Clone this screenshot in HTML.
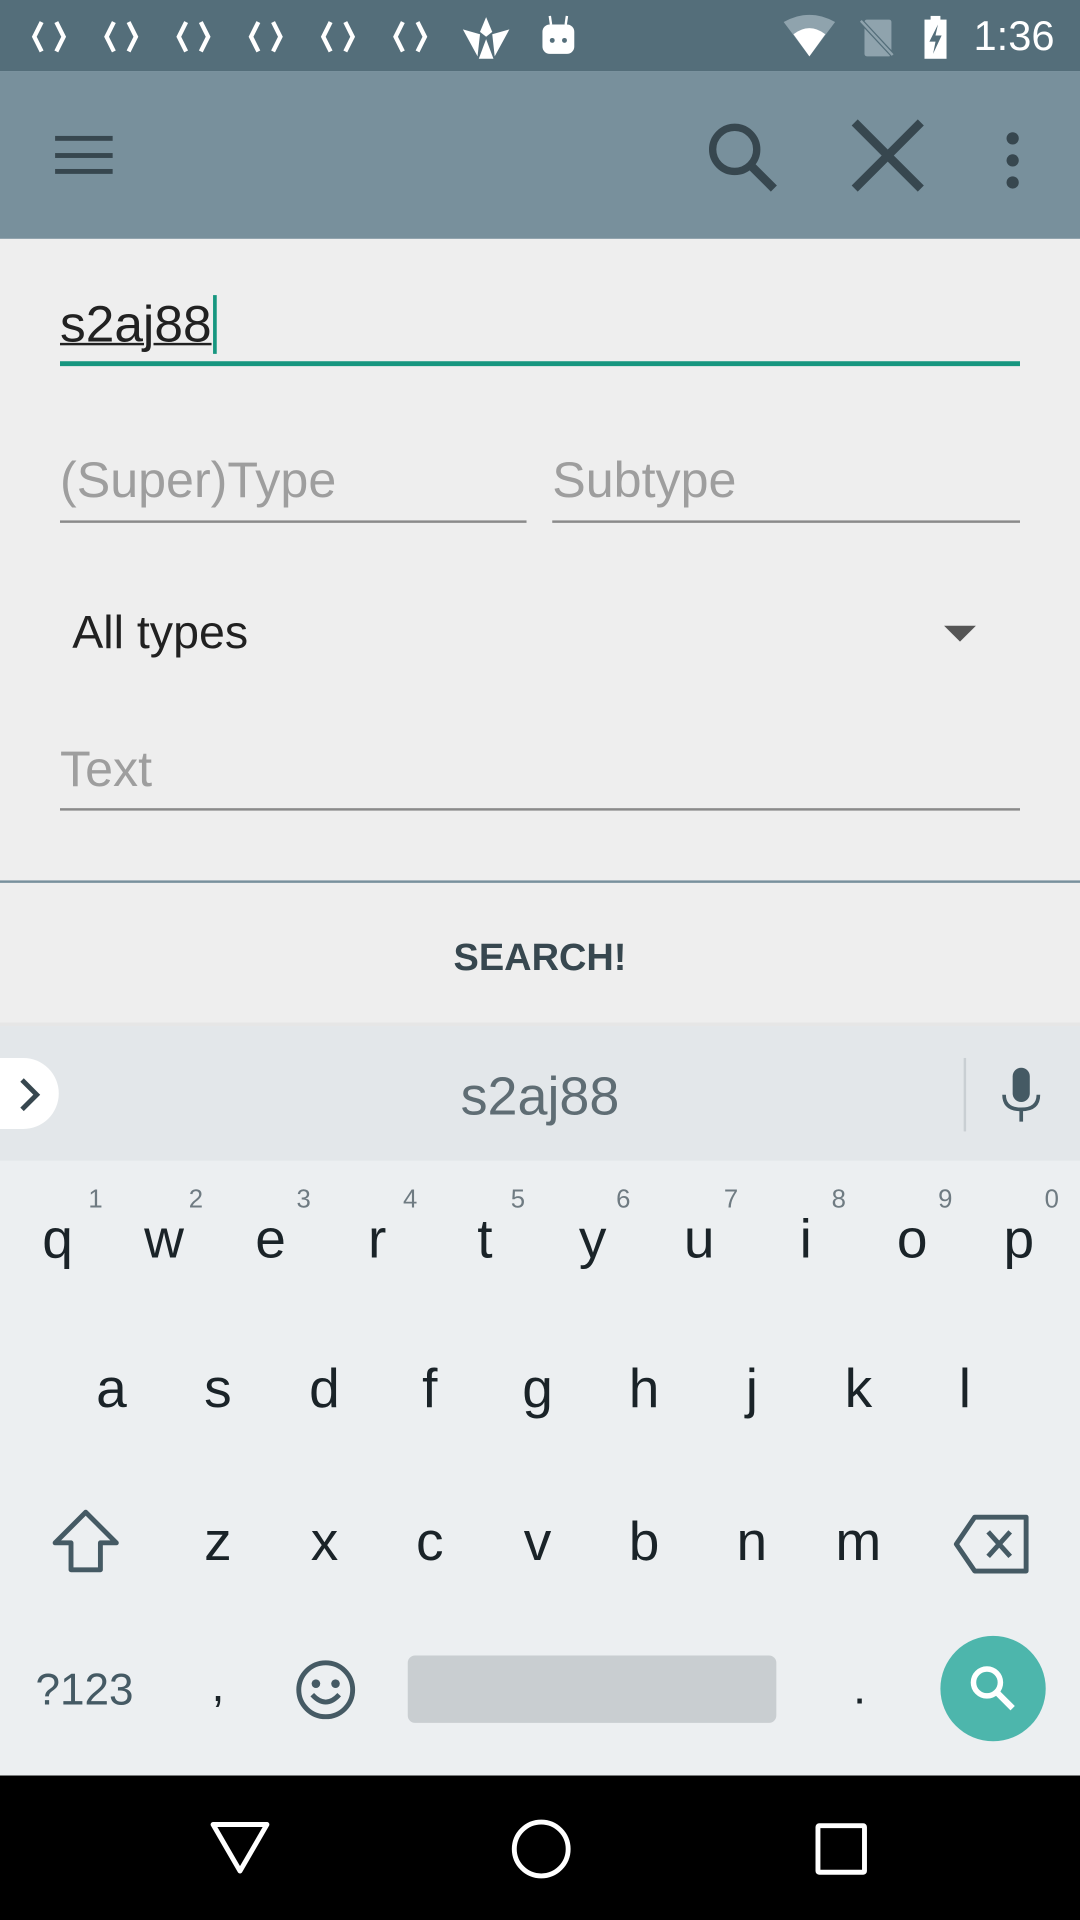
<!DOCTYPE html>
<html><head><meta charset="utf-8"><style>
html,body{margin:0;padding:0;width:1080px;height:1920px;overflow:hidden;background:#eee}
#s{position:absolute;left:0;top:0;width:882px;height:1568px;transform:scale(1.22449);transform-origin:0 0;font-family:"Liberation Sans",sans-serif;background:#eeeeee}
.a{position:absolute}
.k{position:absolute;width:60px;margin-left:-30px;text-align:center;font-size:45px;color:#1a2328;line-height:1}
.n{position:absolute;width:30px;margin-left:-15px;text-align:center;font-size:21px;color:#6f7b82;line-height:1}
.ul{position:absolute;height:2px;background:#8a8a8a}
.ph{position:absolute;font-size:41px;color:#9e9e9e;line-height:1}
</style></head><body><div id="s">
<div class="a" style="left:0;top:0;width:882px;height:58px;background:#546e7a"></div>
<svg class="a" style="left:0;top:0" width="370" height="58">
<g fill="none" stroke="#fff" stroke-width="3.5">
<path d="M34 18 L28 30 L34 42 M46 18 L52 30 L46 42" transform="translate(0,0)"/>
<path d="M34 18 L28 30 L34 42 M46 18 L52 30 L46 42" transform="translate(59,0)"/>
<path d="M34 18 L28 30 L34 42 M46 18 L52 30 L46 42" transform="translate(118,0)"/>
<path d="M34 18 L28 30 L34 42 M46 18 L52 30 L46 42" transform="translate(177,0)"/>
<path d="M34 18 L28 30 L34 42 M46 18 L52 30 L46 42" transform="translate(236,0)"/>
<path d="M34 18 L28 30 L34 42 M46 18 L52 30 L46 42" transform="translate(295,0)"/>
</g></svg>
<svg class="a" style="left:376px;top:12px" width="42" height="38" viewBox="0 0 42 38"><polygon points="21,2 26,14 21,18 16,14" fill="#fff"/><polygon points="2,12 16,16 14,34" fill="#fff"/><polygon points="40,12 26,16 28,34" fill="#fff"/><polygon points="21,20 15,36 27,36" fill="#fff"/></svg>
<svg class="a" style="left:440px;top:10px" width="32" height="36"><rect x="3" y="10" width="26" height="24" rx="6" fill="#fff"/><circle cx="11" cy="23" r="2" fill="#546e7a"/><circle cx="21" cy="23" r="2" fill="#546e7a"/><line x1="9" y1="3" x2="10" y2="10" stroke="#fff" stroke-width="2"/><line x1="23" y1="3" x2="22" y2="10" stroke="#fff" stroke-width="2"/></svg>
<svg class="a" style="left:638px;top:12px" width="50" height="36"><path d="M2 6 Q23 -6 44 6 L23 34 Z" fill="#8fa3ad"/><path d="M10 16 Q23 6 36 16 L23 34 Z" fill="#fff"/></svg>
<svg class="a" style="left:700px;top:14px" width="34" height="34"><rect x="6" y="2" width="22" height="30" rx="2" fill="#8fa3ad"/><line x1="2" y1="2" x2="30" y2="32" stroke="#546e7a" stroke-width="4"/><line x1="3" y1="3" x2="29" y2="31" stroke="#8fa3ad" stroke-width="2"/></svg>
<svg class="a" style="left:750px;top:12px" width="28" height="38"><rect x="5" y="4" width="18" height="32" fill="#fff"/><rect x="10" y="1" width="8" height="4" fill="#fff"/><path d="M16 8 L9 22 L14 22 L12 32 L19 17 L14 17 Z" fill="#546e7a"/></svg>
<div class="a" style="left:795px;top:11px;font-size:34px;color:#fff">1:36</div>
<div class="a" style="left:0;top:58px;width:882px;height:137px;background:#78909c"></div>
<div class="a" style="left:45px;top:111px;width:47px;height:4px;background:#37474f"></div>
<div class="a" style="left:45px;top:125px;width:47px;height:4px;background:#37474f"></div>
<div class="a" style="left:45px;top:138px;width:47px;height:4px;background:#37474f"></div>
<svg class="a" style="left:572px;top:96px" width="70" height="66"><circle cx="28" cy="26" r="18" fill="none" stroke="#37474f" stroke-width="6"/><line x1="41" y1="39" x2="60" y2="58" stroke="#37474f" stroke-width="7"/></svg>
<svg class="a" style="left:694px;top:96px" width="64" height="64"><path d="M4 4 L58 58 M58 4 L4 58" stroke="#37474f" stroke-width="7"/></svg>
<div class="a" style="left:822px;top:108px;width:10px;height:10px;border-radius:5px;background:#37474f;box-shadow:0 18px 0 #37474f,0 36px 0 #37474f"></div>
<div class="a" style="left:49px;top:241px;font-size:42px;color:#212121;line-height:1;text-decoration:underline;text-decoration-thickness:2px;white-space:nowrap">s2aj88<span style="display:inline-block;width:3px;height:48px;background:#16967f;vertical-align:-10px;margin-left:1px"></span></div>
<div class="a" style="left:49px;top:295px;width:784px;height:4px;background:#16967f"></div>
<div class="ph" style="left:49px;top:372px">(Super)Type</div>
<div class="ul" style="left:49px;top:425px;width:381px"></div>
<div class="ph" style="left:451px;top:372px">Subtype</div>
<div class="ul" style="left:451px;top:425px;width:382px"></div>
<div class="a" style="left:59px;top:498px;font-size:38px;color:#212121;line-height:1">All types</div>
<div class="a" style="left:771px;top:511px;width:0;height:0;border-left:13px solid transparent;border-right:13px solid transparent;border-top:13px solid #555"></div>
<div class="ph" style="left:49px;top:608px">Text</div>
<div class="ul" style="left:49px;top:660px;width:784px"></div>
<div class="a" style="left:0;top:719px;width:882px;height:2px;background:#78909c"></div>
<div class="a" style="left:0;top:766px;width:882px;text-align:center;font-size:31px;font-weight:bold;color:#37474f;line-height:1">SEARCH!</div>
<div class="a" style="left:0;top:835px;width:882px;height:4px;background:#e6e6e6"></div>
<div class="a" style="left:0;top:838px;width:882px;height:110px;background:#e3e7ea"></div>
<div class="a" style="left:-30px;top:864px;width:78px;height:58px;border-radius:29px;background:#fff"></div>
<svg class="a" style="left:10px;top:878px" width="30" height="32"><path d="M8 4 L20 16 L8 28" fill="none" stroke="#37474f" stroke-width="4"/></svg>
<div class="a" style="left:0;top:874px;width:882px;text-align:center;font-size:44px;color:#5f6d74;line-height:1">s2aj88</div>
<div class="a" style="left:787px;top:864px;width:2px;height:60px;background:#c9cfd3"></div>
<svg class="a" style="left:814px;top:870px" width="40" height="50"><rect x="13" y="2" width="14" height="28" rx="7" fill="#455a64"/><path d="M6 24 Q6 36 20 36 Q34 36 34 24" fill="none" stroke="#455a64" stroke-width="3"/><line x1="20" y1="36" x2="20" y2="46" stroke="#455a64" stroke-width="3"/></svg>
<div class="a" style="left:0;top:948px;width:882px;height:502px;background:#eceff1"></div>
<div class="n" style="left:78px;top:969px">1</div><div class="n" style="left:160px;top:969px">2</div><div class="n" style="left:248px;top:969px">3</div><div class="n" style="left:335px;top:969px">4</div><div class="n" style="left:423px;top:969px">5</div><div class="n" style="left:509px;top:969px">6</div><div class="n" style="left:597px;top:969px">7</div><div class="n" style="left:685px;top:969px">8</div><div class="n" style="left:772px;top:969px">9</div><div class="n" style="left:859px;top:969px">0</div>
<div class="k" style="left:47px;top:989px">q</div><div class="k" style="left:134px;top:989px">w</div><div class="k" style="left:221px;top:989px">e</div><div class="k" style="left:308px;top:989px">r</div><div class="k" style="left:396px;top:989px">t</div><div class="k" style="left:484px;top:989px">y</div><div class="k" style="left:571px;top:989px">u</div><div class="k" style="left:658px;top:989px">i</div><div class="k" style="left:745px;top:989px">o</div><div class="k" style="left:832px;top:989px">p</div>
<div class="k" style="left:91px;top:1111px">a</div><div class="k" style="left:178px;top:1111px">s</div><div class="k" style="left:265px;top:1111px">d</div><div class="k" style="left:351px;top:1111px">f</div><div class="k" style="left:439px;top:1111px">g</div><div class="k" style="left:526px;top:1111px">h</div><div class="k" style="left:614px;top:1111px">j</div><div class="k" style="left:701px;top:1111px">k</div><div class="k" style="left:788px;top:1111px">l</div>
<svg class="a" style="left:42px;top:1232px" width="56" height="54"><path d="M28 3 L53 28 L40 28 L40 50 L16 50 L16 28 L3 28 Z" fill="none" stroke="#455a64" stroke-width="4" stroke-linejoin="round"/></svg>
<div class="k" style="left:178px;top:1236px">z</div><div class="k" style="left:265px;top:1236px">x</div><div class="k" style="left:351px;top:1236px">c</div><div class="k" style="left:439px;top:1236px">v</div><div class="k" style="left:526px;top:1236px">b</div><div class="k" style="left:614px;top:1236px">n</div><div class="k" style="left:701px;top:1236px">m</div>
<svg class="a" style="left:778px;top:1236px" width="64" height="50"><path d="M18 3 L60 3 L60 47 L18 47 L3 25 Z" fill="none" stroke="#455a64" stroke-width="4" stroke-linejoin="round"/><path d="M29 15 L47 35 M47 15 L29 35" stroke="#455a64" stroke-width="4"/></svg>
<div class="a" style="left:29px;top:1362px;font-size:36px;color:#455a64;line-height:1">?123</div>
<div class="k" style="left:178px;top:1358px;font-size:38px">,</div>
<svg class="a" style="left:240px;top:1354px" width="52" height="52"><circle cx="26" cy="26" r="22" fill="none" stroke="#455a64" stroke-width="4"/><circle cx="18" cy="21" r="3.5" fill="#455a64"/><circle cx="34" cy="21" r="3.5" fill="#455a64"/><path d="M15 30 Q26 42 37 30" fill="none" stroke="#455a64" stroke-width="4"/></svg>
<div class="a" style="left:333px;top:1352px;width:301px;height:55px;border-radius:6px;background:#c9ced1"></div>
<div class="k" style="left:702px;top:1360px;font-size:38px">.</div>
<div class="a" style="left:768px;top:1336px;width:86px;height:86px;border-radius:43px;background:#4db6ac"></div>
<svg class="a" style="left:786px;top:1354px" width="50" height="50"><circle cx="20" cy="20" r="11" fill="none" stroke="#fff" stroke-width="4.5"/><line x1="28" y1="28" x2="41" y2="41" stroke="#fff" stroke-width="5"/></svg>
<div class="a" style="left:0;top:1450px;width:882px;height:118px;background:#000"></div>
<svg class="a" style="left:170px;top:1486px" width="52" height="46"><path d="M4 4 L48 4 L26 42 Z" fill="none" stroke="#fff" stroke-width="4" stroke-linejoin="round"/></svg>
<div class="a" style="left:418px;top:1486px;width:40px;height:40px;border:4px solid #fff;border-radius:50%"></div>
<div class="a" style="left:666px;top:1489px;width:34px;height:34px;border:4px solid #fff;border-radius:3px"></div>
</div></body></html>
